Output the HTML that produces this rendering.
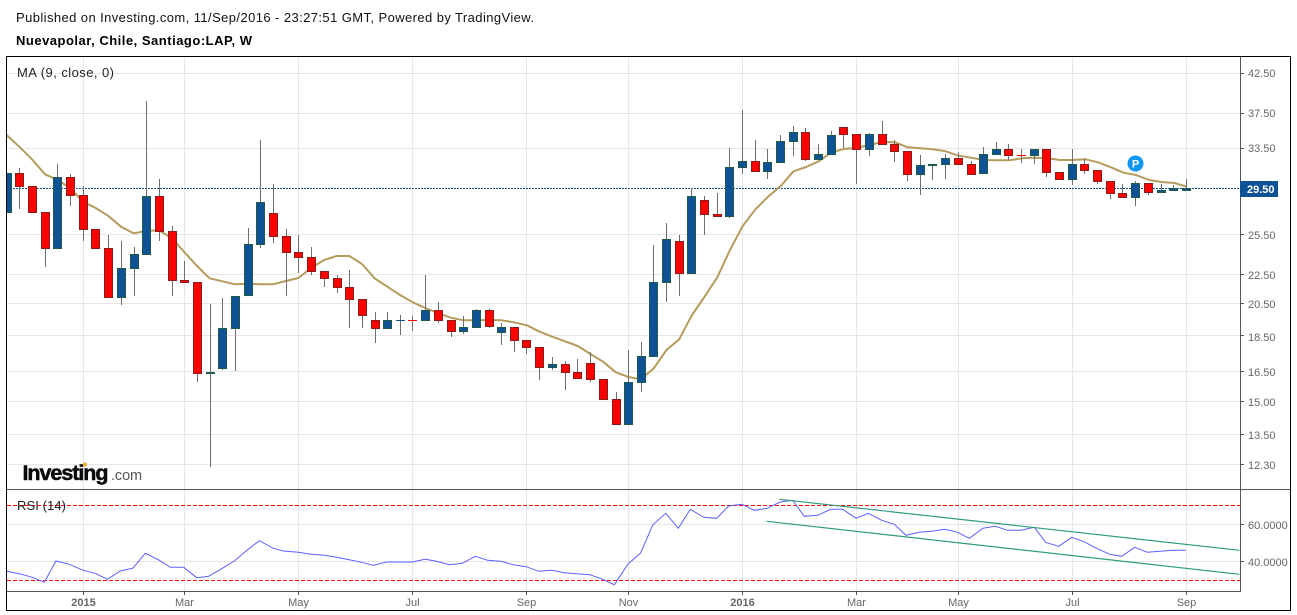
<!DOCTYPE html>
<html><head><meta charset="utf-8"><title>Nuevapolar</title>
<style>html,body{margin:0;padding:0;background:#fff;width:1297px;height:615px;overflow:hidden}svg{display:block}text{font-family:"Liberation Sans",Arial,sans-serif}</style>
</head><body>
<svg xmlns="http://www.w3.org/2000/svg" width="1297" height="615" viewBox="0 0 1297 615">
<defs><clipPath id="c"><rect x="7" y="57" width="1233" height="432"/></clipPath></defs>
<rect width="1297" height="615" fill="#fff"/>
<text x="16" y="22" font-size="13" fill="#111" textLength="518" lengthAdjust="spacing">Published on Investing.com, 11/Sep/2016 - 23:27:51 GMT, Powered by TradingView.</text>
<text x="16" y="45" font-size="13" font-weight="bold" fill="#000" textLength="236" lengthAdjust="spacing">Nuevapolar, Chile, Santiago:LAP, W</text>
<path shape-rendering="crispEdges" stroke="#e6e6e6" fill="none" d="M7 73.5H1240M7 113.5H1240M7 148.5H1240M7 234.5H1240M7 274.5H1240M7 303.5H1240M7 335.5H1240M7 371.5H1240M7 401.5H1240M7 434.5H1240M7 464.5H1240M7 524.5H1240M7 561.5H1240M83.5 57V591M184.5 57V591M298.5 57V591M412.5 57V591M526.5 57V591M628.5 57V591M742.5 57V591M856.5 57V591M958.5 57V591M1072.5 57V591M1186.5 57V591"/>
<path shape-rendering="crispEdges" stroke="#0d5295" stroke-dasharray="2 1" d="M7 188.5H1240"/>
<g clip-path="url(#c)">
<polyline fill="none" stroke="#b59c5e" stroke-width="2" stroke-linejoin="round" points="6.6,135 19.3,146.7 32,159.3 45,174.3 57.7,180 70,188 83,201.7 95.7,208 108,215.7 121,226.7 133.5,233.3 146,231 159,230.3 171.6,238 184,251.7 197,266 209.6,278.3 222.4,281.3 235,284.3 247.7,283.7 260.4,284.3 273,284.3 285.8,281 298.5,278 311,268 324,260 336.6,256 349.3,256 362,264 374.6,278.3 387.4,286.7 400,295 412.7,302.3 425.4,308 438.3,313.3 450.8,317.7 463.5,320.3 476,320.3 489,320 501.5,320.3 514,322.3 527,325.3 539.6,331.7 552.3,336.7 565,341.3 577.7,346 590.4,354 603,361.7 615.8,372.3 628.5,377 641,379.3 653.8,368.3 666.5,350 679.2,339.3 692,315 704.6,296.7 717.3,277.3 730,250 742.7,226 755.4,209.3 768,196.7 780.8,186 793.4,171.3 806,167 818.8,161.3 831.5,152.3 844,149 857,147.7 869.6,145 882.3,142 895,142.3 907.7,147.3 920.4,148.3 933,149.3 945.8,151.3 958.5,155.7 971,157.7 984,160 996.6,160.3 1009.4,160.3 1022,158.3 1034.8,157.7 1047.5,158.3 1060,160 1072.6,160 1085.5,159.3 1098,162.3 1111,167.3 1123.6,172.7 1136,175 1149,180 1161.6,182 1174.3,183 1187,186.7"/>
<path shape-rendering="crispEdges" fill="none" stroke="#6e6e6e" d="M19.5 168V209M45.5 212V267M57.5 164V177M70.5 174V206M83.5 186V241M108.5 235V248M121.5 241V305M134.5 247V296M146.5 101V196M159.5 179V241M172.5 226V296M184.5 261V283M197.5 373V382M210.5 304V467M222.5 298V370M235.5 328V371M248.5 228V244M260.5 140V248M273.5 184V243M286.5 229V296M298.5 235V273M311.5 247V275M324.5 278V287M337.5 275V293M349.5 270V328M362.5 315V328M375.5 312V343M387.5 312V320M400.5 315V335M412.5 316V331M425.5 275V310M438.5 302V323M451.5 331V337M463.5 316V334M476.5 309V310M489.5 309V328M501.5 323V345M514.5 340V352M526.5 347V354M539.5 367V380M552.5 357V370M565.5 361V390M577.5 359V372M590.5 352V382M616.5 392V399M628.5 350V382M641.5 342V392M653.5 245V282M666.5 223V302M679.5 235V296M691.5 188V196M704.5 196V235M717.5 193V214M729.5 148V218M742.5 110V174M755.5 140V161M767.5 149V179M780.5 135V141M793.5 126V156M805.5 128V161M818.5 144V154M831.5 131V135M843.5 134V148M856.5 149V184M869.5 133V156M882.5 121V134M894.5 140V162M907.5 174V181M920.5 155V195M932.5 165V180M945.5 154V179M958.5 152V158M971.5 161V164M983.5 147V154M996.5 142V149M1008.5 144V160M1021.5 149V163M1034.5 155V164M1046.5 172V177M1072.5 149V185M1084.5 159V174M1097.5 181V184M1110.5 193V199M1122.5 184V193M1135.5 181V206M1148.5 192V195M1161.5 184V190M1173.5 185V188M1186.5 179V188"/>
<path shape-rendering="crispEdges" fill="#f00" stroke="#8a1c1c" d="M15.5 173.5h8v13h-8zM28.5 186.5h8v26h-8zM41.5 212.5h8v36h-8zM66.5 177.5h8v18h-8zM79.5 195.5h8v34h-8zM91.5 229.5h8v19h-8zM104.5 248.5h8v49h-8zM155.5 196.5h8v35h-8zM168.5 231.5h8v49h-8zM180.5 280.5h8v2h-8zM193.5 282.5h8v91h-8zM269.5 213.5h8v23h-8zM282.5 236.5h8v16h-8zM294.5 252.5h8v5h-8zM307.5 257.5h8v14h-8zM320.5 271.5h8v7h-8zM333.5 278.5h8v9h-8zM345.5 287.5h8v12h-8zM358.5 299.5h8v16h-8zM371.5 320.5h8v8h-8zM434.5 310.5h8v10h-8zM447.5 320.5h8v11h-8zM485.5 310.5h8v16h-8zM510.5 327.5h8v13h-8zM522.5 340.5h8v7h-8zM535.5 347.5h8v20h-8zM561.5 364.5h8v8h-8zM573.5 372.5h8v6h-8zM586.5 363.5h8v16h-8zM599.5 379.5h8v20h-8zM612.5 399.5h8v25h-8zM675.5 241.5h8v32h-8zM700.5 200.5h8v14h-8zM713.5 214.5h8v2h-8zM751.5 161.5h8v10h-8zM801.5 132.5h8v27h-8zM839.5 127.5h8v7h-8zM852.5 134.5h8v15h-8zM878.5 134.5h8v10h-8zM890.5 144.5h8v7h-8zM903.5 151.5h8v23h-8zM954.5 158.5h8v6h-8zM967.5 164.5h8v10h-8zM1004.5 149.5h8v6h-8zM1042.5 149.5h8v23h-8zM1055.5 172.5h8v7h-8zM1080.5 164.5h8v6h-8zM1093.5 170.5h8v11h-8zM1106.5 181.5h8v12h-8zM1118.5 193.5h8v4h-8zM1144.5 183.5h8v9h-8z"/>
<path shape-rendering="crispEdges" fill="#0d5295" stroke="#1f5a4a" d="M3.5 173.5h8v39h-8zM53.5 177.5h8v71h-8zM117.5 268.5h8v29h-8zM130.5 254.5h8v14h-8zM142.5 196.5h8v58h-8zM206.5 372.5h8v1h-8zM218.5 328.5h8v40h-8zM231.5 296.5h8v32h-8zM244.5 244.5h8v51h-8zM256.5 202.5h8v42h-8zM383.5 320.5h8v8h-8zM421.5 310.5h8v10h-8zM459.5 327.5h8v4h-8zM472.5 310.5h8v17h-8zM497.5 327.5h8v5h-8zM548.5 364.5h8v3h-8zM624.5 382.5h8v42h-8zM637.5 356.5h8v26h-8zM649.5 282.5h8v74h-8zM662.5 239.5h8v43h-8zM687.5 196.5h8v77h-8zM725.5 167.5h8v49h-8zM738.5 161.5h8v6h-8zM763.5 162.5h8v9h-8zM776.5 141.5h8v21h-8zM789.5 132.5h8v9h-8zM814.5 154.5h8v5h-8zM827.5 135.5h8v19h-8zM865.5 134.5h8v15h-8zM916.5 165.5h8v9h-8zM928.5 164.5h8v1h-8zM941.5 158.5h8v6h-8zM979.5 154.5h8v19h-8zM992.5 149.5h8v5h-8zM1030.5 149.5h8v6h-8zM1068.5 164.5h8v15h-8zM1131.5 183.5h8v14h-8zM1157.5 190.5h8v2h-8zM1169.5 188.5h8v2h-8zM1182.5 188.5h8v2h-8z"/>
<path shape-rendering="crispEdges" stroke="#0d5295" d="M396 320.5h9"/>
<path shape-rendering="crispEdges" stroke="#f00" d="M408 320.5h9M1017 155.5h9"/>
</g>
<circle cx="1135.5" cy="163.5" r="8" fill="#0b96f5"/>
<text x="1135.5" y="167.5" font-size="11" font-weight="bold" fill="#fff" text-anchor="middle">P</text>
<!-- RSI -->
<path shape-rendering="crispEdges" stroke="#f00" stroke-dasharray="4 2" d="M7 505.5H1240M7 580.5H1240"/>
<polyline fill="none" stroke="#5f5fff" stroke-width="1" points="6.6,571.3 19.3,573.7 32.3,577.3 44.3,582.3 56,561 69.3,564.3 83.3,570.3 95.3,573.3 107.3,579.3 120.3,571 132.7,568.3 145.3,553.3 158.3,559.7 170.3,567.3 183.7,567.3 196.7,577.7 208.7,576.3 221.7,568.7 234.3,561 247.3,550 259.3,540.7 273.3,548.3 283.3,551 298.3,552.3 311.3,554.3 324.3,555.3 336.7,557.3 349.3,559.7 361.7,562.3 373.3,565.3 386.7,562 400,562 412.3,562 425,559.3 436.7,561.3 449.3,564.7 462.3,563.3 475.3,556.3 487.7,560.3 500.7,561.3 513.3,564.7 526.3,566.7 538.7,571.3 551.7,570.3 564.3,572.7 576.7,573.7 590,574.7 602.7,579.3 614.3,584.7 628.3,563.7 640.7,553 652.7,525 665.7,513.3 678.3,528.3 690.3,509.3 703.7,517.3 716.7,518.3 728.7,506 741.7,504.3 754.3,510.3 767.3,508.3 780,502 792.7,500.3 804.3,516.3 817.7,515.3 830.7,509.3 842.7,509.3 856,518.3 868.3,513.3 881.7,520.3 894.3,524.3 906,535.3 919.3,532.3 931.7,531.3 945,529.3 957.7,532.3 969.3,538.3 982.7,528.3 995.3,526.3 1007.7,530.3 1021,530.3 1034.3,527.3 1045.7,542.3 1058.7,546.3 1071.7,537.3 1084,541.7 1097.3,548.7 1110,554.3 1121.7,556.3 1134.7,547.3 1147.3,552.3 1160,551.3 1173.3,550.3 1185.7,550.3"/>
<path fill="none" stroke="#2e9e82" stroke-width="1.2" d="M779.3 499.3L1239.3 550.3M766.7 521.3L1239.3 574.3"/>
<!-- logo -->
<text x="22.5" y="480" font-size="21.5" font-weight="bold" fill="#0a0a0a" stroke="#0a0a0a" stroke-width=".5" letter-spacing="-1.05">Investing</text>
<text x="111" y="480" font-size="14.5" fill="#555" letter-spacing="-.1">.com</text>
<circle cx="85" cy="464.5" r="2" fill="#f5a623"/>
<!-- legends -->
<text x="17" y="77" font-size="13" fill="#222" textLength="97" lengthAdjust="spacing">MA (9, close, 0)</text>
<text x="17" y="510" font-size="13" fill="#222" textLength="49" lengthAdjust="spacing">RSI (14)</text>
<!-- frame -->
<path shape-rendering="crispEdges" fill="none" stroke="#000" stroke-width="1" d="M6.5 56.5H1290.5V610.5H6.5Z"/>
<path shape-rendering="crispEdges" fill="none" stroke="#555" d="M7 489.5H1290M7 591.5H1240.5V57M1240 73.5h4M1240 113.5h4M1240 148.5h4M1240 234.5h4M1240 274.5h4M1240 303.5h4M1240 335.5h4M1240 371.5h4M1240 401.5h4M1240 434.5h4M1240 464.5h4M1240 524.5h4M1240 561.5h4M83.5 591v4M184.5 591v4M298.5 591v4M412.5 591v4M526.5 591v4M628.5 591v4M742.5 591v4M856.5 591v4M958.5 591v4M1072.5 591v4M1186.5 591v4"/>
<!-- axis labels -->
<g font-size="11" fill="#666">
<text x="1248" y="77">42.50</text><text x="1248" y="117">37.50</text><text x="1248" y="152">33.50</text><text x="1248" y="239">25.50</text><text x="1248" y="279">22.50</text><text x="1248" y="308">20.50</text><text x="1248" y="341">18.50</text><text x="1248" y="376">16.50</text><text x="1248" y="406">15.00</text><text x="1248" y="439">13.50</text><text x="1248" y="469">12.30</text>
<text x="1248" y="529">60.0000</text><text x="1248" y="566">40.0000</text>
<g text-anchor="middle"><text x="83.5" y="606" font-weight="bold">2015</text><text x="184.5" y="606">Mar</text><text x="298.5" y="606">May</text><text x="412.5" y="606">Jul</text><text x="526.5" y="606">Sep</text><text x="628.5" y="606">Nov</text><text x="742.5" y="606" font-weight="bold">2016</text><text x="856.5" y="606">Mar</text><text x="958.5" y="606">May</text><text x="1072.5" y="606">Jul</text><text x="1186.5" y="606">Sep</text></g>
</g>
<rect x="1240" y="181" width="38" height="16" fill="#0d5295"/>
<text x="1247" y="193" font-size="11" font-weight="bold" fill="#fff">29.50</text>
</svg>
</body></html>
